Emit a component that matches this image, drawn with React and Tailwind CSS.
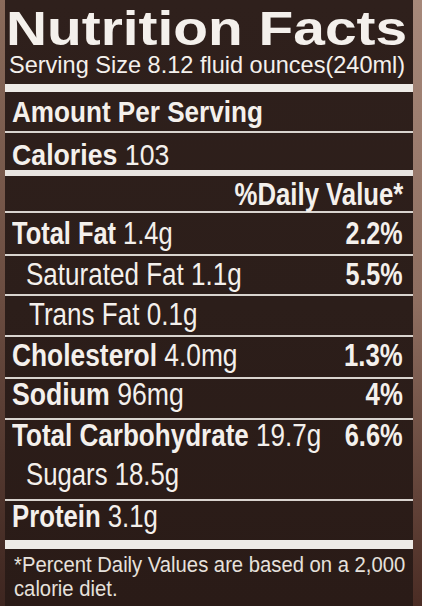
const sp = "inline-block whitespace-nowrap";

function Line() {
  return <div className="h-[2px] w-full bg-[#d9d4cf]" />;
}

export default function App() {
  return (
    <div className="w-[422px] h-[606px] flex overflow-hidden bg-[#5a3e33] font-['Liberation_Sans',Arial,sans-serif] text-[#f4f0ec]">
      <div className="w-[5px] shrink-0 h-full bg-gradient-to-b from-[#8a6b5b] via-[#6a4c40] to-[#3e2620]" />
      <div className="flex-1 min-w-0 overflow-hidden h-full flex flex-col bg-gradient-to-b from-[#2f201c] via-[#2c1e1a] to-[#2a1b17]">
        {/* Header */}
        <div className="h-[84px] shrink-0 pt-[4px] pl-[1px]">
          <div className="text-[49px] leading-none font-bold">
            <span className={sp + " origin-left scale-x-[1.16]"}>Nutrition Facts</span>
          </div>
          <div className="ml-[3px] text-[24px] leading-none">
            <span className={sp + " origin-left scale-x-[0.98]"}>Serving Size 8.12 fluid ounces(240ml)</span>
          </div>
        </div>
        <div className="h-[8px] shrink-0 w-full bg-[#eeebe7]" />

        {/* Amount per serving */}
        <div className="h-[39px] shrink-0 pb-[4px] pl-[7px] flex items-end text-[30px] leading-none font-bold">
          <span className={sp + " origin-left scale-x-[0.87]"}>Amount Per Serving</span>
        </div>
        <Line />
        <div className="h-[37px] shrink-0 pl-[7px] flex items-end text-[30px] leading-none">
          <span className={sp + " origin-left scale-x-[0.89]"}>
            <b>Calories</b> 103
          </span>
        </div>
        <div className="h-[6px] shrink-0 w-full bg-[#e8e4e0]" />
        <div className="h-[35px] shrink-0 pb-[1px] pr-[10px] flex items-end justify-end text-[31px] leading-none font-bold">
          <span className={sp + " origin-right scale-x-[0.83]"}>%Daily Value*</span>
        </div>
        <Line />

        {/* Total Fat */}
        <div className="h-[41px] shrink-0 pb-[5px] pl-[7px] pr-[10px] flex items-end justify-between text-[31px] leading-none">
          <span className={sp + " origin-left scale-x-[0.82]"}>
            <b>Total Fat</b> 1.4g
          </span>
          <span className={sp + " origin-right scale-x-[0.81] font-bold"}>2.2%</span>
        </div>
        <Line />
        <div className="h-[38px] shrink-0 pb-[4px] pl-[21px] pr-[10px] flex items-end justify-between text-[31px] leading-none">
          <span className={sp + " origin-left scale-x-[0.84]"}>Saturated Fat 1.1g</span>
          <span className={sp + " origin-right scale-x-[0.81] font-bold"}>5.5%</span>
        </div>
        <Line />
        <div className="h-[39px] shrink-0 pb-[5px] pl-[24px] pr-[10px] flex items-end justify-between text-[31px] leading-none">
          <span className={sp + " origin-left scale-x-[0.84]"}>Trans Fat 0.1g</span>
        </div>
        <Line />
        <div className="h-[40px] shrink-0 pb-[6px] pl-[7px] pr-[10px] flex items-end justify-between text-[31px] leading-none">
          <span className={sp + " origin-left scale-x-[0.85]"}>
            <b>Cholesterol</b> 4.0mg
          </span>
          <span className={sp + " origin-right scale-x-[0.83] font-bold"}>1.3%</span>
        </div>
        <Line />
        <div className="h-[39px] shrink-0 pb-[8px] pl-[7px] pr-[10px] flex items-end justify-between text-[31px] leading-none">
          <span className={sp + " origin-left scale-x-[0.86]"}>
            <b>Sodium</b> 96mg
          </span>
          <span className={sp + " origin-right scale-x-[0.83] font-bold"}>4%</span>
        </div>
        <Line />
        <div className="h-[38px] shrink-0 pb-[7px] pl-[7px] pr-[10px] flex items-end justify-between text-[31px] leading-none">
          <span className={sp + " w-[300px] shrink-0 origin-left scale-x-[0.84]"}>
            <b>Total Carbohydrate</b> 19.7g
          </span>
          <span className={sp + " shrink-0 origin-right scale-x-[0.82] font-bold"}>6.6%</span>
        </div>
        <div className="h-[41px] shrink-0 pb-[9px] pl-[21px] pr-[10px] flex items-end justify-between text-[31px] leading-none">
          <span className={sp + " origin-left scale-x-[0.83]"}>Sugars 18.5g</span>
        </div>
        <Line />
        <div className="h-[39px] shrink-0 pb-[8px] pl-[7px] pr-[10px] flex items-end justify-between text-[31px] leading-none">
          <span className={sp + " origin-left scale-x-[0.83]"}>
            <b>Protein</b> 3.1g
          </span>
        </div>
        <div className="h-[9px] shrink-0 w-full bg-[#eeebe7]" />

        {/* Footnote */}
        <div className="flex-1 pt-[4px] pl-[9px] text-[22px] leading-[24px] text-[#e6e1dc]">
          <div>
            <span className={sp + " origin-left scale-x-[0.92]"}>*Percent Daily Values are based on a 2,000</span>
          </div>
          <div>
            <span className={sp + " origin-left scale-x-[0.92]"}>calorie diet.</span>
          </div>
        </div>
      </div>
      <div className="w-[9px] shrink-0 h-full bg-gradient-to-b from-[#a6887a] via-[#8e6e60] to-[#4a2c24]" />
    </div>
  );
}
